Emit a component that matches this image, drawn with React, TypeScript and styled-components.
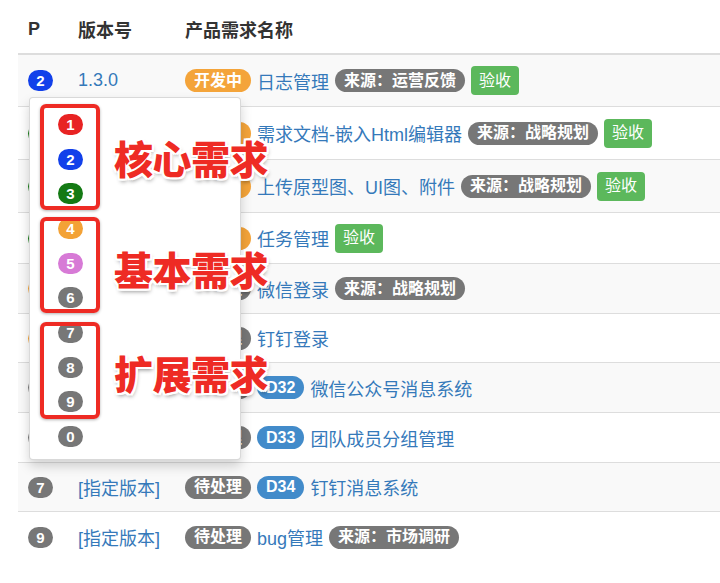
import React from "react";
import styled, { createGlobalStyle } from "styled-components";

const Global = createGlobalStyle`
  html, body { margin: 0; padding: 0; background: #fff; }
  body { font-family: "Liberation Sans", "Noto Sans CJK SC", sans-serif; color: #333; }
  * { box-sizing: border-box; }
`;

const Page = styled.div`
  position: relative;
  width: 720px;
  height: 583px;
  overflow: hidden;
`;

const Table = styled.div`
  margin-left: 18px;
  width: 720px;
`;

const HeadRow = styled.div`
  display: grid;
  grid-template-columns: 50px 107px 1fr;
  height: 55px;
  border-bottom: 2px solid #ddd;
  padding-top: 5px;
  align-items: center;
`;

const HeadCell = styled.div`
  padding-left: 10px;
  font-size: 18px;
  font-weight: bold;
  color: #333;
`;

const Row = styled.div<{ $h: number; $striped: boolean; $last?: boolean }>`
  display: grid;
  grid-template-columns: 50px 107px 1fr;
  align-items: center;
  height: ${(p) => p.$h}px;
  background: ${(p) => (p.$striped ? "#f9f9f9" : "#fff")};
  border-bottom: ${(p) => (p.$last ? "none" : "1px solid #ddd")};
`;

const Cell = styled.div<{ $pad?: number }>`
  padding-left: ${(p) => p.$pad ?? 10}px;
  display: flex;
  align-items: center;
  gap: 6px;
  white-space: nowrap;
  font-size: 18px;
`;

const PRIO: Record<string, string> = {
  "1": "#e82323",
  "2": "#1240ea",
  "3": "#147a14",
  "4": "#f3a236",
  "5": "#d77ad6",
  "6": "#777",
  "7": "#777",
  "8": "#777",
  "9": "#777",
  "0": "#777",
};

const Prio = styled.span<{ $c: string }>`
  display: inline-flex;
  align-items: center;
  justify-content: center;
  width: 25px;
  height: 21px;
  border-radius: 11px;
  background: ${(p) => p.$c};
  color: #fff;
  font-family: "Liberation Sans", sans-serif;
  font-weight: bold;
  font-size: 15px;
  line-height: 1;
`;

const Link = styled.span`
  color: #3579ba;
  font-size: 18px;
`;

const Pill = styled.span<{ $c: string }>`
  display: inline-flex;
  align-items: center;
  height: 23px;
  padding: 0 9px;
  border-radius: 12px;
  background: ${(p) => p.$c};
  color: #fff;
  font-size: 16px;
  font-weight: bold;
  line-height: 1;
`;

const Accept = styled.span`
  display: inline-flex;
  align-items: center;
  height: 29px;
  padding: 0 8px;
  border-radius: 4px;
  background: #5cb85c;
  color: #fff;
  font-size: 16px;
  line-height: 1;
`;

const Dropdown = styled.div`
  position: absolute;
  left: 29px;
  top: 97px;
  width: 212px;
  height: 363px;
  background: #fff;
  border: 1px solid rgba(0, 0, 0, 0.15);
  border-radius: 4px;
  box-shadow: 0 6px 12px rgba(0, 0, 0, 0.175);
  padding: 9px 0 0 28px;
`;

const DropItem = styled.div`
  height: 34.7px;
  display: flex;
  align-items: center;
`;

const Frame = styled.div<{ $top: number; $h: number }>`
  position: absolute;
  left: 40px;
  top: ${(p) => p.$top}px;
  width: 60px;
  height: ${(p) => p.$h}px;
  border: 4px solid #ee2b24;
  border-radius: 6px;
  box-shadow: 0 1px 3px rgba(0, 0, 0, 0.3);
`;

const Note = styled.div<{ $top: number }>`
  position: absolute;
  left: 114px;
  top: ${(p) => p.$top}px;
  font-family: "Noto Sans CJK SC", sans-serif;
  font-size: 39px;
  line-height: 40px;
  font-weight: 900;
  color: #ee2b24;
  letter-spacing: -0.5px;
  text-shadow: -2px 0 0 #fff, 2px 0 0 #fff, 0 -2px 0 #fff, 0 2px 0 #fff,
    -2px -2px 0 #fff, 2px 2px 0 #fff, -2px 2px 0 #fff, 2px -2px 0 #fff,
    1px 3px 4px rgba(0, 0, 0, 0.45);
`;

type Item = {
  p: string;
  v: string;
  s: "dev" | "todo";
  id?: string;
  name: string;
  src?: string;
  accept?: boolean;
  h: number;
};

const rows: Item[] = [
  { p: "2", v: "1.3.0", s: "dev", name: "日志管理", src: "来源：运营反馈", accept: true, h: 52 },
  { p: "3", v: "1.3.0", s: "dev", name: "需求文档-嵌入Html编辑器", src: "来源：战略规划", accept: true, h: 53 },
  { p: "3", v: "1.3.0", s: "dev", name: "上传原型图、UI图、附件", src: "来源：战略规划", accept: true, h: 53 },
  { p: "3", v: "1.3.0", s: "dev", name: "任务管理", accept: true, h: 51 },
  { p: "4", v: "[指定版本]", s: "todo", name: "微信登录", src: "来源：战略规划", h: 50 },
  { p: "4", v: "[指定版本]", s: "todo", name: "钉钉登录", h: 49 },
  { p: "6", v: "[指定版本]", s: "todo", id: "D32", name: "微信公众号消息系统", h: 50 },
  { p: "6", v: "[指定版本]", s: "todo", id: "D33", name: "团队成员分组管理", h: 50 },
  { p: "7", v: "[指定版本]", s: "todo", id: "D34", name: "钉钉消息系统", h: 49 },
  { p: "9", v: "[指定版本]", s: "todo", name: "bug管理", src: "来源：市场调研", h: 50 },
];

const digits = ["1", "2", "3", "4", "5", "6", "7", "8", "9", "0"];

export default function App() {
  return (
    <Page>
      <Global />
      <Table>
        <HeadRow>
          <HeadCell>P</HeadCell>
          <HeadCell>版本号</HeadCell>
          <HeadCell>产品需求名称</HeadCell>
        </HeadRow>
        {rows.map((r, i) => (
          <Row key={i} $h={r.h} $striped={i % 2 === 0} $last={i === rows.length - 1}>
            <Cell $pad={10}>
              <Prio $c={PRIO[r.p]}>{r.p}</Prio>
            </Cell>
            <Cell>
              <Link>{r.v}</Link>
            </Cell>
            <Cell>
              <Pill $c={r.s === "dev" ? "#f4a43a" : "#777"}>{r.s === "dev" ? "开发中" : "待处理"}</Pill>
              {r.id && <Pill $c="#428bca">{r.id}</Pill>}
              <Link>{r.name}</Link>
              {r.src && <Pill $c="#777">{r.src}</Pill>}
              {r.accept && <Accept>验收</Accept>}
            </Cell>
          </Row>
        ))}
      </Table>
      <Dropdown>
        {digits.map((d) => (
          <DropItem key={d}>
            <Prio $c={PRIO[d]}>{d}</Prio>
          </DropItem>
        ))}
      </Dropdown>
      <Frame $top={104} $h={106} />
      <Frame $top={217} $h={96} />
      <Frame $top={322} $h={97} />
      <Note $top={137}>核心需求</Note>
      <Note $top={248}>基本需求</Note>
      <Note $top={352}>扩展需求</Note>
    </Page>
  );
}
